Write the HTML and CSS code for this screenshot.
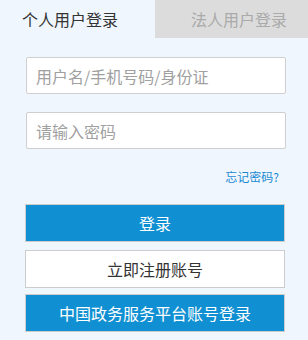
FILE: index.html
```html
<!DOCTYPE html>
<html lang="zh-CN">
  <head>
    <meta charset="UTF-8" />
    <title>登录</title>
    <link rel="stylesheet" href="styles.css">
  </head>
  <body>
    <div class="login-box">
      <div class="tabs">
        <div class="tab tab-active">个人用户登录</div>
        <div class="tab tab-other">法人用户登录</div>
      </div>

      <form class="login-form">
        <input class="field" type="text" placeholder="用户名/手机号码/身份证" />
        <input class="field" type="password" placeholder="请输入密码" />

        <div class="forgot-row">
          <a class="forgot" href="#">忘记密码?</a>
        </div>

        <div class="actions">
          <button class="btn btn-primary" type="button">登录</button>
          <button class="btn btn-plain" type="button">立即注册账号</button>
          <button class="btn btn-primary btn-gov" type="button">中国政务服务平台账号登录</button>
        </div>
      </form>
    </div>
  </body>
</html>
```

FILE: styles.css
```css
body {
  margin: 0px;
  background-color: #eff6fd;
  font-family: "Noto Sans CJK SC", "Noto Sans", sans-serif;
}

.login-box {
  width: 308px;
  height: 340px;
}

.tabs {
  display: flex;
  height: 38px;
}

.tab {
  font-size: 16px;
  line-height: 38px;
  box-sizing: border-box;
}

.tab-active {
  width: 155px;
  padding-left: 22px;
  color: #333;
}

.tab-other {
  flex: 1;
  padding-left: 36px;
  color: #aaa;
  background-color: #dcdcdc;
}

.login-form {
  display: flex;
  flex-flow: column;
  padding: 19px 22px 0px 26px;
}

.field {
  height: 37px;
  margin: 0px 0px 18px;
  padding: 0px 9px;
  box-sizing: border-box;
  border: 1px solid #cfcfcf;
  border-radius: 2px;
  background-color: white;
  font-family: inherit;
  font-size: 16px;
  color: #333;
  outline: none;

  &::placeholder {
    color: #a0a0a0;
  }

  &:last-of-type {
    margin-bottom: 0px;
  }
}

.forgot-row {
  display: flex;
  justify-content: flex-end;
  margin-top: 18px;
  padding-right: 7px;
  height: 20px;
  line-height: 20px;
}

.forgot {
  font-size: 12px;
  color: #1a8ad4;
  text-decoration: none;
}

.actions {
  display: flex;
  flex-flow: column;
  gap: 8px;
  margin: 17px 0px 0px -1px;
}

.btn {
  height: 38px;
  width: 260px;
  margin: 0px;
  padding: 0px;
  box-sizing: border-box;
  border: 1px solid #cccccc;
  font-family: inherit;
  font-size: 16px;
  cursor: pointer;
}

.btn-primary {
  color: white;
  background-color: #1090d2;
}

.btn-plain {
  color: #333;
  background-color: white;
}

.btn-gov {
  margin-top: -2px;
}
```
